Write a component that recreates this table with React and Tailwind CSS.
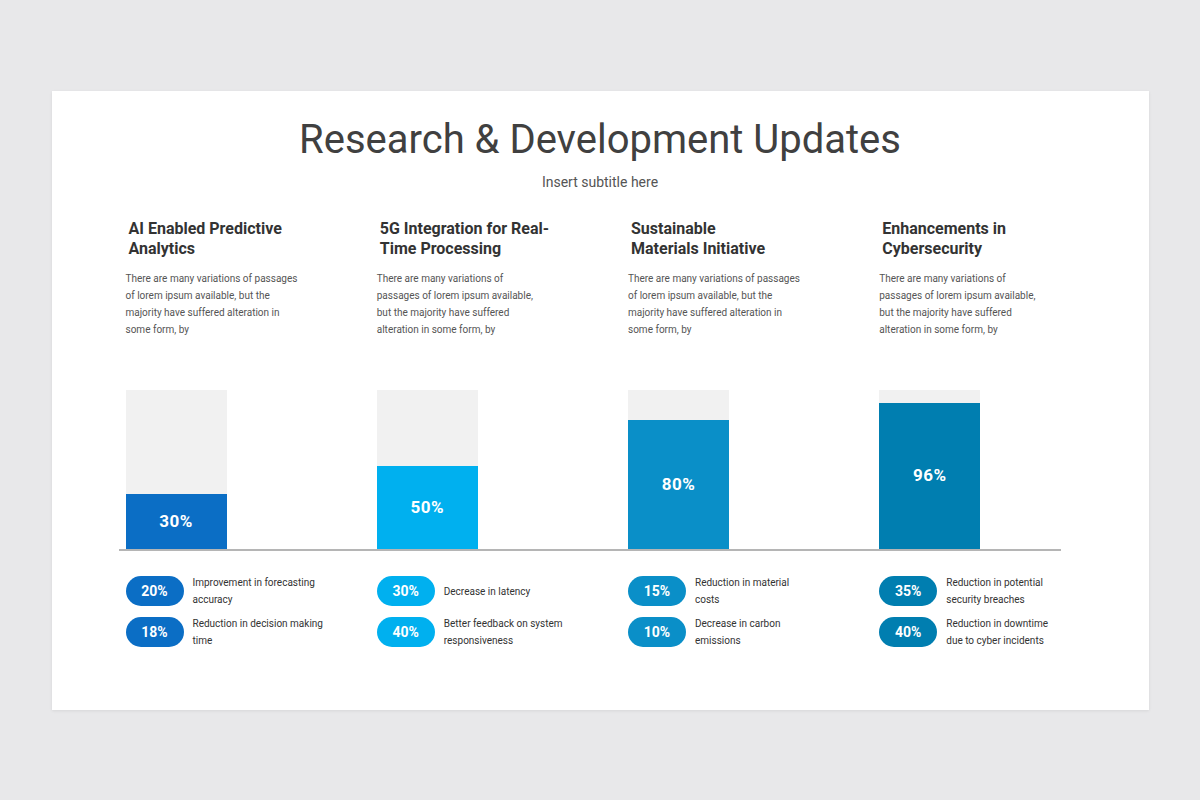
import React from 'react';

const FONT = { fontFamily: 'Roboto, "Liberation Sans", Arial, sans-serif' };

const BODY = 'There are many variations of passages of lorem ipsum available, but the majority have suffered alteration in some form, by';

const COLUMNS = [
  {
    title: ['AI Enabled Predictive', 'Analytics'],
    textW: 'w-[176px]',
    statW: 'w-[140px]',
    value: '30%',
    barH: 'h-[55px]',
    bar: 'bg-[#0b6ec5]',
    stats: [
      { pct: '20%', label: 'Improvement in forecasting accuracy' },
      { pct: '18%', label: 'Reduction in decision making time' },
    ],
  },
  {
    title: ['5G Integration for Real-', 'Time Processing'],
    textW: 'w-[164px]',
    statW: 'w-[135px]',
    value: '50%',
    barH: 'h-[83px]',
    bar: 'bg-[#00b0ef]',
    stats: [
      { pct: '30%', label: 'Decrease in latency' },
      { pct: '40%', label: 'Better feedback on system responsiveness' },
    ],
  },
  {
    title: ['Sustainable', 'Materials Initiative'],
    textW: 'w-[176px]',
    statW: 'w-[110px]',
    value: '80%',
    barH: 'h-[129px]',
    bar: 'bg-[#0a8fc8]',
    stats: [
      { pct: '15%', label: 'Reduction in material costs' },
      { pct: '10%', label: 'Decrease in carbon emissions' },
    ],
  },
  {
    title: ['Enhancements in', 'Cybersecurity'],
    textW: 'w-[164px]',
    statW: 'w-[110px]',
    value: '96%',
    barH: 'h-[146px]',
    bar: 'bg-[#007eb0]',
    stats: [
      { pct: '35%', label: 'Reduction in potential security breaches' },
      { pct: '40%', label: 'Reduction in downtime due to cyber incidents' },
    ],
  },
];

function Bar({ col }) {
  return (
    <div className="w-[101px] h-[159px] bg-[#f1f1f1] flex flex-col justify-end">
      <div className={`${col.barH} ${col.bar} flex items-center justify-center`}>
        <span className="text-white text-[17px] font-bold tracking-[0.5px]">{col.value}</span>
      </div>
    </div>
  );
}

function Stat({ pct, label, color, width }) {
  return (
    <div className="h-[34px] flex items-center gap-[9px]">
      <div className={`w-[58px] h-[30px] rounded-full ${color} flex items-center justify-center shrink-0`}>
        <span className="text-white text-[14px] font-bold">{pct}</span>
      </div>
      <p className={`${width} text-[10px] leading-[17px] text-[#333]`}>{label}</p>
    </div>
  );
}

export default function App() {
  return (
    <div className="min-h-[800px] bg-[#e8e8ea] pt-[91px]" style={FONT}>
      <div className="mx-auto w-[1097px] h-[619px] bg-white shadow-[0_1px_3px_rgba(0,0,0,0.08)] pt-[25px]">
        {/* Header */}
        <h1 className="text-center text-[40px] leading-[48px] text-[#404040]">
          Research &amp; Development Updates
        </h1>
        <p className="text-center text-[14px] leading-[20px] text-[#555] mt-[8px]">Insert subtitle here</p>

        {/* Titles and descriptions */}
        <div className="pl-[74px] mt-[27px]">
          <div className="grid grid-cols-4 w-[1005px] h-[171px]">
            {COLUMNS.map((c, i) => (
              <div key={i}>
                <h2 className="pl-[3px] text-[16px] leading-[20px] font-bold text-[#333]">
                  {c.title[0]}<br />{c.title[1]}
                </h2>
                <p className={`${c.textW} mt-[11px] text-[10px] leading-[17px] text-[#555]`}>{BODY}</p>
              </div>
            ))}
          </div>
        </div>

        {/* Chart */}
        <div className="ml-[67px] w-[942px] border-b-2 border-[#b5b5b5]">
          <div className="grid grid-cols-4 w-[1012px] pl-[7px]">
            {COLUMNS.map((c, i) => (
              <div key={i}><Bar col={c} /></div>
            ))}
          </div>
        </div>

        {/* Stats */}
        <div className="pl-[74px] mt-[23px]">
          <div className="grid grid-cols-4 w-[1005px]">
            {COLUMNS.map((c, i) => (
              <div key={i} className="flex flex-col gap-[7px]">
                {c.stats.map((s, j) => (
                  <Stat key={j} pct={s.pct} label={s.label} color={c.bar} width={c.statW} />
                ))}
              </div>
            ))}
          </div>
        </div>
      </div>
    </div>
  );
}
